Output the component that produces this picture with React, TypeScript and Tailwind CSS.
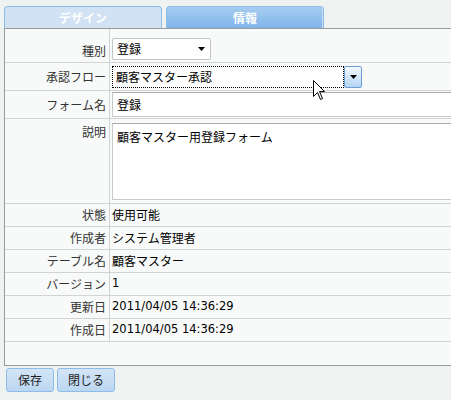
import React from "react";

const font = { fontFamily: '"Noto Sans CJK JP", "Noto Sans", sans-serif' };

function Tri() {
  return (
    <svg width="7" height="4" viewBox="0 0 7 4">
      <path d="M0 0 L7 0 L3.5 4 Z" fill="#000" />
    </svg>
  );
}

function Row({ label, children, h, latin }: { label: string; children?: React.ReactNode; h: string; latin?: boolean }) {
  return (
    <div className={`flex border-b border-[#d2d4d3] ${h}`}>
      <div className="w-[105px] shrink-0 border-r border-[#d2d4d3] pr-[3px] text-right text-[12px] text-[#333] flex justify-end items-center">
        {label}
      </div>
      <div
        className={`flex-1 min-w-0 pl-[2px] flex items-center text-black ${
          latin ? "text-[11.5px] font-['DejaVu_Sans',sans-serif]" : "text-[12px]"
        }`}
      >
        {children}
      </div>
    </div>
  );
}

export default function App() {
  const info: [string, string, boolean][] = [
    ["状態", "使用可能", false],
    ["作成者", "システム管理者", false],
    ["テーブル名", "顧客マスター", false],
    ["バージョン", "1", true],
    ["更新日", "2011/04/05 14:36:29", true],
    ["作成日", "2011/04/05 14:36:29", true],
  ];
  return (
    <div className="relative w-[451px] h-[400px] overflow-hidden bg-[#eef3f1] leading-none" style={font}>
      {/* tabs */}
      <div className="flex h-[28px] items-end pl-[4px] gap-[4px]">
        <div className="w-[158px] h-[22px] rounded-t-[4px] border border-b-0 border-[#8dbce9] bg-[#d0e2f3] flex items-center justify-center text-white text-[12px] font-bold">
          デザイン
        </div>
        <div className="w-[158px] h-[22px] rounded-t-[4px] border border-b-0 border-[#8dbce9] bg-gradient-to-b from-[#a6cdf1] to-[#80b4e9] flex items-center justify-center text-white text-[12px] font-bold shadow-[inset_-1px_0_0_#c9e1f7]">
          情報
        </div>
      </div>
      {/* panel */}
      <div className="ml-[4px] w-[470px] border-t border-l border-b border-[#9a9c9b] bg-[#f8faf9]">
        <div className="flex border-b border-[#d2d4d3] h-[34px]">
          <div className="w-[105px] shrink-0 border-r border-[#d2d4d3] pr-[3px] flex items-end justify-end pb-[5px] text-[12px] text-[#333]">
            種別
          </div>
          <div className="flex-1 pl-[2px] pt-[9px]">
            <div className="w-[99px] h-[22px] border border-[#c3c5c4] rounded-[2px] bg-white flex items-center justify-between pl-[4px] pr-[5px] text-[12px]">
              <span>登録</span>
              <Tri />
            </div>
          </div>
        </div>
        <div className="flex border-b border-[#d2d4d3] h-[28px]">
          <div className="w-[105px] shrink-0 border-r border-[#d2d4d3] pr-[3px] flex items-center justify-end text-[12px] text-[#333]">
            承認フロー
          </div>
          <div className="flex-1 pl-[2px] pt-[3px]">
            <div className="flex h-[22px]">
              <div className="w-[232px] h-[22px] border border-dotted border-black bg-white flex items-center pl-[3px] text-[12px]">
                顧客マスター承認
              </div>
              <div className="w-[18px] h-[22px] border border-[#6b9fd3] rounded-[2px] bg-gradient-to-b from-[#f4f9fe] to-[#b3d5f4] flex items-center justify-center">
                <Tri />
              </div>
            </div>
          </div>
        </div>
        <div className="flex border-b border-[#d2d4d3] h-[28px]">
          <div className="w-[105px] shrink-0 border-r border-[#d2d4d3] pr-[3px] flex items-center justify-end text-[12px] text-[#333]">
            フォーム名
          </div>
          <div className="flex-1 pl-[2px] pt-[1px]">
            <div className="h-[25px] border border-[#c8cac9] border-t-[#a9abaa] bg-white flex items-center pl-[4px] text-[12px]">
              登録
            </div>
          </div>
        </div>
        <div className="flex border-b border-[#d2d4d3] h-[85px]">
          <div className="w-[105px] shrink-0 border-r border-[#d2d4d3] pr-[3px] pt-[7px] flex items-start justify-end text-[12px] text-[#333]">
            説明
          </div>
          <div className="flex-1 pl-[2px] pt-[4px]">
            <div className="h-[77px] border border-[#c8cac9] border-t-[#a9abaa] bg-white pl-[4px] pt-[7px] text-[12px]">
              顧客マスター用登録フォーム
            </div>
          </div>
        </div>
        {info.map(([k, v, latin]) => (
          <Row key={k} label={k} h="h-[23px]" latin={latin}>
            {v}
          </Row>
        ))}
        <div className="h-[23px]" />
      </div>
      {/* buttons */}
      <div className="flex gap-[3px] pl-[6px] mt-[2px]">
        <button className="w-[48px] h-[24px] rounded-[3px] border border-[#8dbce9] bg-gradient-to-b from-[#d3e5f6] to-[#bcd6f1] text-[12px] text-[#222]">
          保存
        </button>
        <button className="w-[58px] h-[24px] rounded-[3px] border border-[#8dbce9] bg-gradient-to-b from-[#d3e5f6] to-[#bcd6f1] text-[12px] text-[#222]">
          閉じる
        </button>
      </div>
      {/* cursor */}
      <svg className="absolute left-[313px] top-[80px]" width="13" height="21" viewBox="0 0 13 21">
        <path d="M0.5 0.5 L0.5 16.5 L4.5 12.5 L7.5 19.5 L9.5 18.5 L6.5 11.5 L11.5 11.5 Z" fill="#fff" stroke="#000" strokeWidth="1" />
      </svg>
    </div>
  );
}
